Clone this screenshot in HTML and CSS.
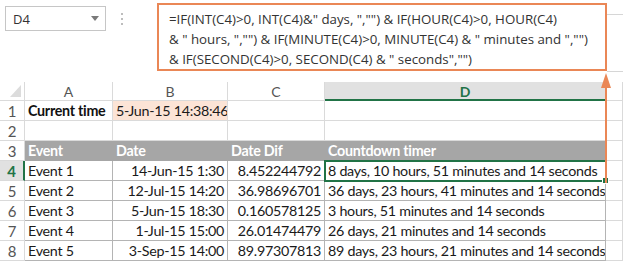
FILE: index.html
```html
<!DOCTYPE html>
<html>
    <head>
        <title>Countdown timer</title>
        <link rel="stylesheet" href="styles.css">
    </head>
    <body>
        <div class="top">
            <div class="namebox"><span>D4</span><span class="caret"></span></div>
            <div class="dots"><i></i><i></i><i></i></div>
            <div class="formula">
                =IF(INT(C4)&gt;0, INT(C4)&amp;" days, ","") &amp; IF(HOUR(C4)&gt;0, HOUR(C4)<br>
                &amp; " hours, ","") &amp; IF(MINUTE(C4)&gt;0, MINUTE(C4) &amp; " minutes and ","")<br>
                &amp; IF(SECOND(C4)&gt;0, SECOND(C4) &amp; " seconds","")
            </div>
            <div class="bar-rest"></div>
        </div>
        <div class="sheet">
            <div class="ch corner"></div>
            <div class="ch">A</div>
            <div class="ch">B</div>
            <div class="ch">C</div>
            <div class="ch active">D</div>
            <div class="ch"></div>

            <div class="rh">1</div>
            <div class="cell bold">Current time</div>
            <div class="cell peach">5-Jun-15 14:38:46</div>
            <div class="cell"></div>
            <div class="cell"></div>
            <div class="cell"></div>

            <div class="rh">2</div>
            <div class="cell"></div>
            <div class="cell"></div>
            <div class="cell"></div>
            <div class="cell"></div>
            <div class="cell"></div>

            <div class="rh">3</div>
            <div class="cell head">Event</div>
            <div class="cell head">Date</div>
            <div class="cell head">Date Dif</div>
            <div class="cell head">Countdown timer</div>
            <div class="cell"></div>

            <div class="rh active">4</div>
            <div class="cell data">Event 1</div>
            <div class="cell data num">14-Jun-15 1:30</div>
            <div class="cell data num">8.452244792</div>
            <div class="cell data sel">8 days, 10 hours, 51 minutes and 14 seconds</div>
            <div class="cell"></div>

            <div class="rh">5</div>
            <div class="cell data">Event 2</div>
            <div class="cell data num">12-Jul-15 14:20</div>
            <div class="cell data num">36.98696701</div>
            <div class="cell data">36 days, 23 hours, 41 minutes and 14 seconds</div>
            <div class="cell"></div>

            <div class="rh">6</div>
            <div class="cell data">Event 3</div>
            <div class="cell data num">5-Jun-15 18:30</div>
            <div class="cell data num">0.160578125</div>
            <div class="cell data">3 hours, 51 minutes and 14 seconds</div>
            <div class="cell"></div>

            <div class="rh">7</div>
            <div class="cell data">Event 4</div>
            <div class="cell data num">1-Jul-15 15:00</div>
            <div class="cell data num">26.01474479</div>
            <div class="cell data">26 days, 21 minutes and 14 seconds</div>
            <div class="cell"></div>

            <div class="rh">8</div>
            <div class="cell data">Event 5</div>
            <div class="cell data num">3-Sep-15 14:00</div>
            <div class="cell data num">89.97307813</div>
            <div class="cell data">89 days, 23 hours, 21 minutes and 14 seconds</div>
            <div class="cell"></div>
        </div>
        <svg class="arrow" width="16" height="116" viewBox="0 0 16 116">
            <line x1="8" y1="12" x2="8" y2="113" stroke="#ea8756" stroke-width="2"/>
            <polygon points="8,3 3,18 13,18" fill="#ea8756"/>
        </svg>
    </body>
</html>
```

FILE: styles.css
```css
body
{
    margin:0;
    width:623px;
    height:262px;
    overflow:hidden;
    background:white;
    font-family:'Lato',sans-serif;
    color:#1a1a1a;
    position:relative;
}
.top
{
    display:flex;
    align-items:flex-start;
    height:82px;
}
.namebox
{
    box-sizing:border-box;
    margin:6px 0 0 5px;
    width:101px;
    height:25px;
    border:1px solid #c6c6c6;
    padding:0 6px 0 7px;
    display:flex;
    align-items:center;
    justify-content:space-between;
    font-family:'Open Sans',sans-serif;
    font-size:13px;
    color:#333;
}
.caret
{
    border-top:5px solid #7a7a7a;
    border-left:4px solid transparent;
    border-right:4px solid transparent;
}
.dots
{
    margin:13px 0 0 15px;
    width:36px;
    display:flex;
    flex-direction:column;
    gap:3px;
}
.dots i
{
    width:2px;
    height:2px;
    background:#bdbdbd;
}
.formula
{
    box-sizing:border-box;
    margin-top:3px;
    width:450px;
    height:68px;
    border:2px solid #ea8756;
    padding:4px 10px;
    font-family:'Open Sans',sans-serif;
    font-size:13.3px;
    line-height:20px;
    color:#333;
    white-space:nowrap;
}
.bar-rest
{
    flex:1;
    margin-top:14px;
    height:56px;
    border-top:1px solid #d6d6d6;
    border-bottom:1px solid #d6d6d6;
}
.sheet
{
    display:grid;
    grid-template-columns:25px 88px 115px 97px 281px 17px;
    grid-template-rows:19px repeat(8,20px);
    font-size:14.3px;
    letter-spacing:-0.28px;
}
.sheet > div
{
    box-sizing:border-box;
    border-right:1px solid #dadada;
    border-bottom:1px solid #dadada;
    white-space:nowrap;
    overflow:hidden;
    line-height:20px;
}
.ch
{
    text-align:center;
    color:#555;
    font-size:14px;
    letter-spacing:0;
}
.ch.active
{
    background:#e1e1e1;
    color:#217346;
    font-weight:bold;
    border-bottom:2px solid #217346;
}
.corner
{
    display:flex;
    align-items:flex-end;
    justify-content:flex-end;
    padding:0 3px 3px 0;
}
.corner::after
{
    content:'';
    width:11px;
    height:12px;
    background:#dcdcdc;
    clip-path:polygon(100% 0,100% 100%,0 100%);
}
.rh
{
    text-align:center;
    color:#555;
    font-size:15px;
}
.rh.active
{
    background:#e1e1e1;
    color:#217346;
    font-weight:bold;
    border-right:2px solid #217346 !important;
}
.cell
{
    padding:0 3px;
}
.bold
{
    font-weight:bold;
    color:#111;
}
.peach
{
    background:#fce4d6;
}
.sheet > .head
{
    background:#a6a6a6;
    color:white;
    font-weight:bold;
    border-color:#a6a6a6;
}
.sheet > .data
{
    border-right-color:#b4b4b4;
    border-bottom-color:#b4b4b4;
}
.num
{
    text-align:right;
}
.sel
{
    position:relative;
    overflow:visible !important;
    outline:2px solid #217346;
    outline-offset:-1px;
}
.sel::after
{
    content:'';
    position:absolute;
    right:-4px;
    bottom:-4px;
    width:5px;
    height:5px;
    background:#217346;
    border:1px solid white;
}
.arrow
{
    position:absolute;
    left:598px;
    top:70px;
}
```
